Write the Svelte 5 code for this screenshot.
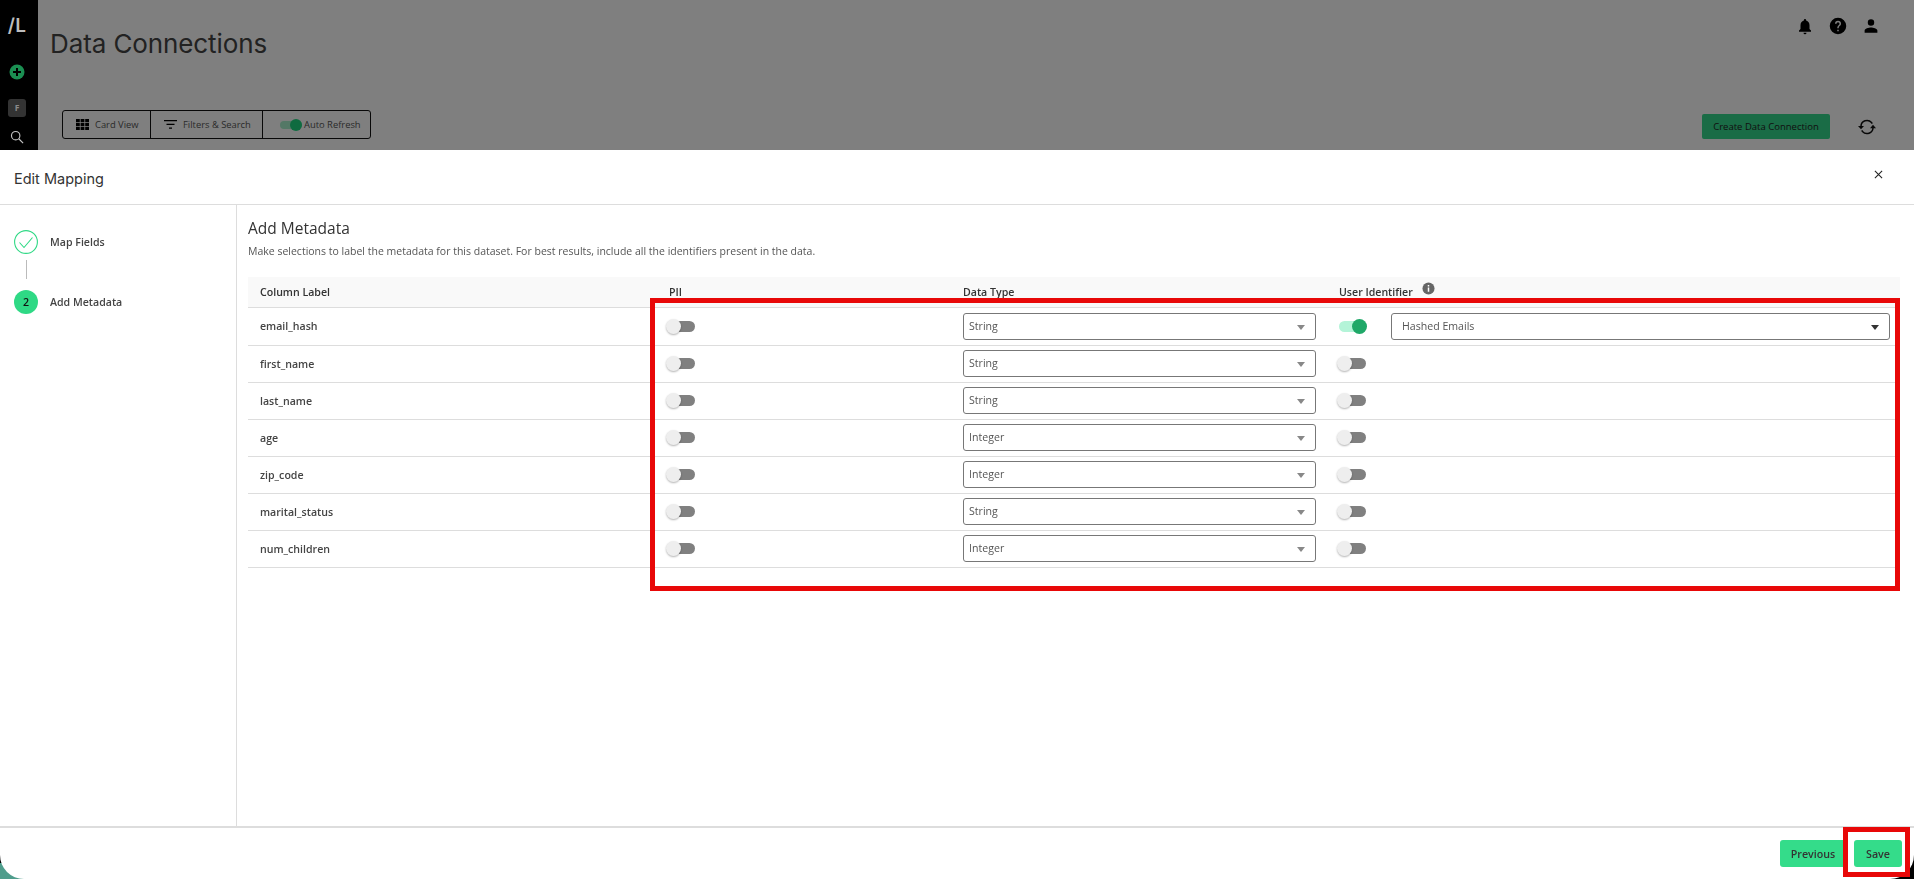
<script>
  const rows = [
    { name: 'email_hash', type: 'String', on: true },
    { name: 'first_name', type: 'String' },
    { name: 'last_name', type: 'String' },
    { name: 'age', type: 'Integer' },
    { name: 'zip_code', type: 'Integer' },
    { name: 'marital_status', type: 'String' },
    { name: 'num_children', type: 'Integer' }
  ];
</script>

<div class="page">
  <aside class="rail">
    <div class="logo">/L</div>
    <svg class="plus" viewBox="0 0 16 16" width="16" height="16"><circle cx="8" cy="8" r="7.500" fill="#1b8f52"/><path d="M8 4v8M4 8h8" stroke="#000" stroke-width="2"/></svg>
    <div class="tile">F</div>
    <svg class="search" viewBox="0 0 16 16" width="14" height="14" fill="none" stroke="#c4c4c4" stroke-width="1.300"><circle cx="6.500" cy="6.500" r="4.800"/><path d="M10 10l5 5"/></svg>
  </aside>
  <main class="main">
    <header class="top">
      <h1>Data Connections</h1>
      <div class="top-icons">
        <svg viewBox="0 0 24 24" width="18" height="18"><path d="M12 23a2 2 0 0 0 2-2h-4a2 2 0 0 0 2 2zm6-7v-5c0-3.100-1.600-5.600-4.500-6.300V4a1.500 1.500 0 0 0-3 0v.7C7.600 5.400 6 7.900 6 11v5l-2 2v1.500h16V18z"/></svg>
        <svg viewBox="0 0 24 24" width="18" height="18"><path fill-rule="evenodd" d="M12 1a11 11 0 1 0 0 22 11 11 0 0 0 0-22zm1 18h-2v-2h2zm2.100-7.800l-.9.9c-.8.700-1.200 1.300-1.200 2.900h-2v-.5c0-1.100.4-2.100 1.200-2.800l1.200-1.300c.4-.3.600-.8.600-1.400a2 2 0 0 0-4 0H8a4 4 0 0 1 8 0c0 .9-.4 1.700-.9 2.200z"/></svg>
        <svg viewBox="0 0 24 24" width="18" height="18"><path d="M12 11.500a4.300 4.300 0 1 0 0-8.600 4.300 4.300 0 0 0 0 8.600zm0 2.500c-3 0-8.500 1.300-8.500 4v3h17v-3c0-2.700-5.500-4-8.500-4z"/></svg>
      </div>
    </header>
    <div class="tools">
      <div class="group">
        <div class="seg one">
          <svg viewBox="0 0 13 11" width="13" height="11"><path d="M0 0h3.800v3.200H0zM4.600 0h3.800v3.200H4.600zM9.200 0H13v3.200H9.200zM0 3.900h3.800v3.200H0zM4.600 3.900h3.800v3.200H4.600zM9.200 3.900H13v3.200H9.200zM0 7.800h3.800V11H0zM4.600 7.800h3.800V11H4.600zM9.200 7.800H13V11H9.200z"/></svg>
          Card View
        </div>
        <div class="seg two">
          <svg viewBox="0 0 13 9" width="13" height="9"><path d="M0 0h13v1.300H0zM2.500 3.700h8V5h-8zM5 7.500h3v1.300H5z"/></svg>
          Filters &amp; Search
        </div>
        <div class="seg three">
          <span class="bg-switch"><i></i></span>
          Auto Refresh
        </div>
      </div>
      <div class="tool-right">
        <div class="create">Create Data Connection</div>
        <svg class="sync" viewBox="0 0 24 24" width="18" height="18" fill="none" stroke="#111" stroke-width="2"><path d="M4 11a8 8 0 0 1 14-5l1 1.500M20 13a8 8 0 0 1-14 5l-1-1.500"/><path d="M0 10.500h8L4 15zM16 13.500h8L20 9z" fill="#111" stroke="none"/></svg>
      </div>
    </div>
  </main>
</div>

<div class="scrim"></div>
<span class="corner-l"></span>
<span class="corner-r"></span>

<section class="modal">
  <header class="m-head">
    <h2>Edit Mapping</h2>
    <svg class="close" viewBox="0 0 10 10" width="9" height="9" fill="none" stroke="#222" stroke-width="1.200"><path d="M1 1l8 8M9 1l-8 8"/></svg>
  </header>
  <div class="m-body">
    <nav class="steps">
      <div class="step">
        <span class="circle done">
          <svg viewBox="0 0 24 24" width="24" height="24" fill="none" stroke="#2fd985" stroke-width="1.100"><circle cx="12" cy="12" r="11.400"/><path d="M5.500 12.500l4.500 5 8.500-10"/></svg>
        </span>
        Map Fields
      </div>
      <div class="connector"></div>
      <div class="step">
        <span class="circle cur">2</span>
        Add Metadata
      </div>
    </nav>
    <div class="content">
      <h3>Add Metadata</h3>
      <p>Make selections to label the metadata for this dataset. For best results, include all the identifiers present in the data.</p>
      <div class="table">
        <div class="row head">
          <div class="c-name">Column Label</div>
          <div class="c-pii"><span class="pii">PII</span></div>
          <div class="c-type">Data Type</div>
          <div class="c-id">User Identifier
            <svg viewBox="0 0 14 14" width="13" height="13"><circle cx="7" cy="7" r="6.500" fill="#666"/><path d="M6.200 6h1.600v4.600H6.200zM6.200 3.300h1.600v1.600H6.200z" fill="#fff"/></svg>
          </div>
        </div>
        {#each rows as r}
          <div class="row">
            <div class="c-name">{r.name}</div>
            <div class="c-pii"><span class="switch"><i></i></span></div>
            <div class="c-type">
              <div class="select">{r.type}<b class="caret"></b></div>
            </div>
            <div class="c-id">
              <span class="switch" class:on={r.on}><i></i></span>
              {#if r.on}
                <div class="select wide">Hashed Emails<b class="caret dark"></b></div>
              {/if}
            </div>
          </div>
        {/each}
      </div>
    </div>
  </div>
  <footer class="m-foot">
    <button>Previous</button>
    <button>Save</button>
  </footer>
</section>

<div class="mark mark-table"></div>
<div class="mark mark-save"></div>

<style>
  :global(body) { margin: 0; background: #fff; overflow: hidden; }
  .page {
    display: flex; width: 1914px; height: 879px; background: #fff;
    font-family: "Open Sans", sans-serif; color: #222;
  }
  .rail {
    position: relative; z-index: 2;
    width: 38px; flex: none; background: #000; color: #fff;
    display: flex; flex-direction: column; align-items: center; box-sizing: border-box; padding: 15px 4px 0 0;
  }
  .logo { font: 600 19px/22px "Inter", sans-serif; letter-spacing: .3px; color: #bdbdbd; }
  .plus { margin-top: 27px; flex: none; }
  .tile { margin-top: 19px; width: 18px; height: 18px; border-radius: 3px; background: #333; color: #8a8a8a; font: 700 8.500px/18px "Open Sans", sans-serif; text-align: center; flex: none; }
  .search { margin-top: 13px; flex: none; }
  .main { flex: 1; min-width: 0; }
  .top { display: flex; justify-content: space-between; align-items: flex-start; height: 98px; box-sizing: border-box; padding-left: 12px; }
  h1 { margin: 26px 0 0; font: 400 26px/36px "Inter", sans-serif; color: #444; letter-spacing: -.1px; }
  .top-icons { display: flex; gap: 15px; padding: 17px 34px 0 0; }
  .tools { display: flex; justify-content: space-between; align-items: flex-start; padding: 12px 38px 0 24px; }
  .group { display: flex; height: 27px; border: 1px solid #111; border-radius: 3px; font-size: 9.400px; color: #555; }
  .seg { display: flex; align-items: center; gap: 6px; box-sizing: border-box; border-right: 1px solid #111; padding-left: 13px; }
  .seg:last-child { border-right: 0; }
  .one { width: 88px; }
  .two { width: 112px; padding-left: 13px; gap: 6px; }
  .three { width: 107px; padding-left: 17px; gap: 2px; }
  .bg-switch { position: relative; width: 22px; height: 8px; border-radius: 4px; background: #a8f0cc; display: block; }
  .bg-switch i { position: absolute; right: 0; top: -2px; width: 12px; height: 12px; border-radius: 50%; background: #1ed680; }
  .tool-right { display: flex; align-items: center; gap: 28px; padding-top: 4px; }
  .create { width: 128px; height: 25px; border-radius: 2px; background: #35d88c; text-align: center; font-size: 9.500px; font-weight: 500; line-height: 25px; color: #222; }
  .sync { flex: none; }

  .scrim { position: fixed; inset: 0; z-index: 1; background: rgba(0,0,0,.5); }
  .corner-l { position: fixed; z-index: 3; left: 0; bottom: 0; width: 26px; height: 16px; background: #4f9d8c; }
  .corner-r { position: fixed; z-index: 3; right: 0; bottom: 0; width: 26px; height: 26px; background: #000; }

  .modal {
    position: fixed; z-index: 4; left: 0; right: 0; top: 150px; bottom: 0; background: #fff;
    border-radius: 0 0 24px 24px; display: flex; flex-direction: column;
    font-family: "Open Sans", sans-serif; color: #333;
  }
  .m-head { flex: none; height: 55px; box-sizing: border-box; border-bottom: 1px solid #ddd; display: flex; align-items: center; justify-content: space-between; padding: 3px 31px 0 14px; }
  h2 { margin: 0; font: 400 14.500px/20px "Inter", sans-serif; color: #333; }
  .close { margin-top: -9px; }
  .m-body { flex: 1; display: flex; min-height: 0; }
  .steps { width: 237px; flex: none; box-sizing: border-box; border-right: 1px solid #ddd; padding: 25px 0 0 14px; }
  .step { display: flex; align-items: center; gap: 12px; font-size: 10.600px; font-weight: 600; color: #444; height: 24px; }
  .circle { width: 24px; height: 24px; border-radius: 50%; display: block; flex: none; }
  .done svg { display: block; }
  .cur { background: #2fd985; color: #111; text-align: center; line-height: 24px; }
  .connector { width: 1px; height: 19px; background: #bbb; margin: 6px 0 11px 12px; }
  .content { flex: 1; min-width: 0; padding: 13px 14px 0 11px; }
  h3 { margin: 0; font: 500 15.500px/20px "Open Sans", sans-serif; color: #333; }
  .content p { margin: 5px 0 0; font-size: 10.500px; line-height: 16px; color: #555; }
  .table { margin-top: 18px; }
  .row { display: grid; grid-template-columns: 407px 296px 376px 1fr; border-bottom: 1px solid #ddd; height: 37px; box-sizing: border-box; align-items: center; padding: 0 0 1px 12px; font-size: 10.600px; font-weight: 600; color: #444; }
  .row:nth-child(2) { height: 38px; }
  .row.head { height: 31px; background: #f9f9f9; color: #333; }
  .pii { margin-left: 2px; }
  .c-id { display: flex; align-items: center; gap: 9px; }
  .head .c-id svg { margin: -6px 0 0 0; }
  .switch { position: relative; display: block; width: 27px; height: 11px; margin-left: 1px; border-radius: 6px; background: #808080; }
  .switch i { position: absolute; left: -2px; top: -2px; width: 15px; height: 15px; border-radius: 50%; background: #eee; box-shadow: 0 1px 2px rgba(0,0,0,.3); }
  .switch.on { background: #b4f4d8; }
  .switch.on i { left: auto; right: -1px; background: #1fa868; box-shadow: none; }
  .c-id .switch { margin: 0; }
  .c-id .select.wide { margin-left: 16px; }
  .select { position: relative; width: 353px; height: 27px; box-sizing: border-box; border: 1px solid #777; border-radius: 3px; padding-left: 5px; line-height: 25px; font-weight: 400; color: #555; font-size: 10.600px; }
  .select.wide { width: 499px; padding-left: 10px; }
  .caret { position: absolute; right: 10px; top: 11px; border: 4px solid transparent; border-top: 5px solid #888; border-bottom: 0; }
  .caret.dark { border-top-color: #333; }
  .m-foot { flex: none; height: 53px; box-sizing: border-box; border-top: 2px solid #ddd; display: flex; justify-content: flex-end; gap: 8px; padding: 12px 12px 0 0; }
  button { height: 27px; border: 0; border-radius: 3px; background: #34dc8a; font: 600 10.700px "Open Sans", sans-serif; color: #333; padding: 0; }
  button:first-child { width: 66px; }
  button:last-child { width: 48px; }
  .mark { position: fixed; z-index: 5; box-sizing: border-box; border: 5px solid #e80808; }
  .mark-table { left: 650px; top: 298px; width: 1250px; height: 293px; }
  .mark-save { left: 1843px; top: 827px; width: 67px; height: 50px; }
</style>
